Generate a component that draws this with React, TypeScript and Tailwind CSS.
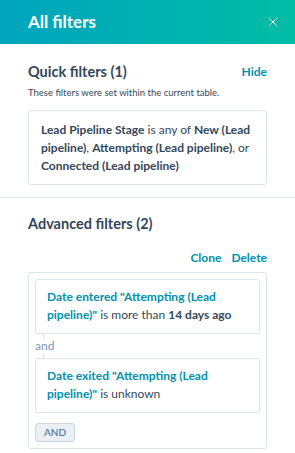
import { X } from "lucide-react";

function FilterCard({ children }: { children: React.ReactNode }) {
  return (
    <div className="rounded-[3px] border border-[#dfe3eb] bg-white px-[11px] pt-[8px] pb-[9px] text-[12px] leading-[18px] text-[#33475b]">
      {children}
    </div>
  );
}

export default function App() {
  return (
    <div
      className="w-[295px] h-[453px] overflow-hidden bg-white text-[#33475b]"
      style={{ fontFamily: "Lato, 'Noto Sans', sans-serif" }}
    >
      {/* Header */}
      <div className="flex h-[44px] items-center justify-between bg-gradient-to-r from-[#00a4bd] to-[#00bda5] pl-[28px] pr-[14px]">
        <h2 className="text-[17px] font-bold text-white">All filters</h2>
        <X size={16} strokeWidth={1.5} className="text-white" />
      </div>

      {/* Quick filters */}
      <div className="border-b border-[#dfe3eb] px-[28px] pt-[18px] pb-[12px]">
        <div className="flex items-center justify-between">
          <h3 className="text-[14.5px] leading-[20px] font-bold">Quick filters (1)</h3>
          <button className="text-[12px] font-bold text-[#0091ae]">Hide</button>
        </div>
        <p className="mt-[4px] text-[9.5px] leading-[14px] text-[#33475b]">
          These filters were set within the current table.
        </p>
        <div className="mt-[10px] rounded-[3px] border border-[#dfe3eb] px-[12px] pt-[10px] pb-[9px] text-[12px] leading-[18px]">
          <span className="font-bold">Lead Pipeline Stage</span> is any of{" "}
          <span className="font-bold">New (Lead pipeline)</span>,{" "}
          <span className="font-bold">Attempting (Lead pipeline)</span>, or{" "}
          <span className="font-bold">Connected (Lead pipeline)</span>
        </div>
      </div>

      {/* Advanced filters */}
      <div className="px-[28px] pt-[16px]">
        <h3 className="text-[14.5px] leading-[20px] font-bold">Advanced filters (2)</h3>
        <div className="mt-[15px] flex justify-end gap-[10px] text-[12px] leading-[18px] font-bold text-[#0091ae]">
          <button>Clone</button>
          <button>Delete</button>
        </div>
        <div className="mt-[5px] rounded-[3px] border border-[#dfe3eb] p-[6px]">
          <FilterCard>
            <span className="font-bold text-[#0091ae]">
              Date entered "Attempting (Lead pipeline)"
            </span>{" "}
            is more than <span className="font-bold">14 days ago</span>
          </FilterCard>
          <div className="flex flex-col">
            <div className="ml-[8px] h-[5px] border-l border-[#dfe3eb]" />
            <span className="text-[12px] leading-[14px] text-[#7c98b6]">and</span>
            <div className="ml-[8px] h-[5px] border-l border-[#dfe3eb]" />
          </div>
          <FilterCard>
            <span className="font-bold text-[#0091ae]">
              Date exited "Attempting (Lead pipeline)"
            </span>{" "}
            is unknown
          </FilterCard>
          <button className="mt-[10px] h-[19px] w-[40px] rounded-[3px] border border-[#cbd6e2] bg-[#eaf0f6] text-[10px] font-medium text-[#506e91]">
            AND
          </button>
        </div>
      </div>
    </div>
  );
}
